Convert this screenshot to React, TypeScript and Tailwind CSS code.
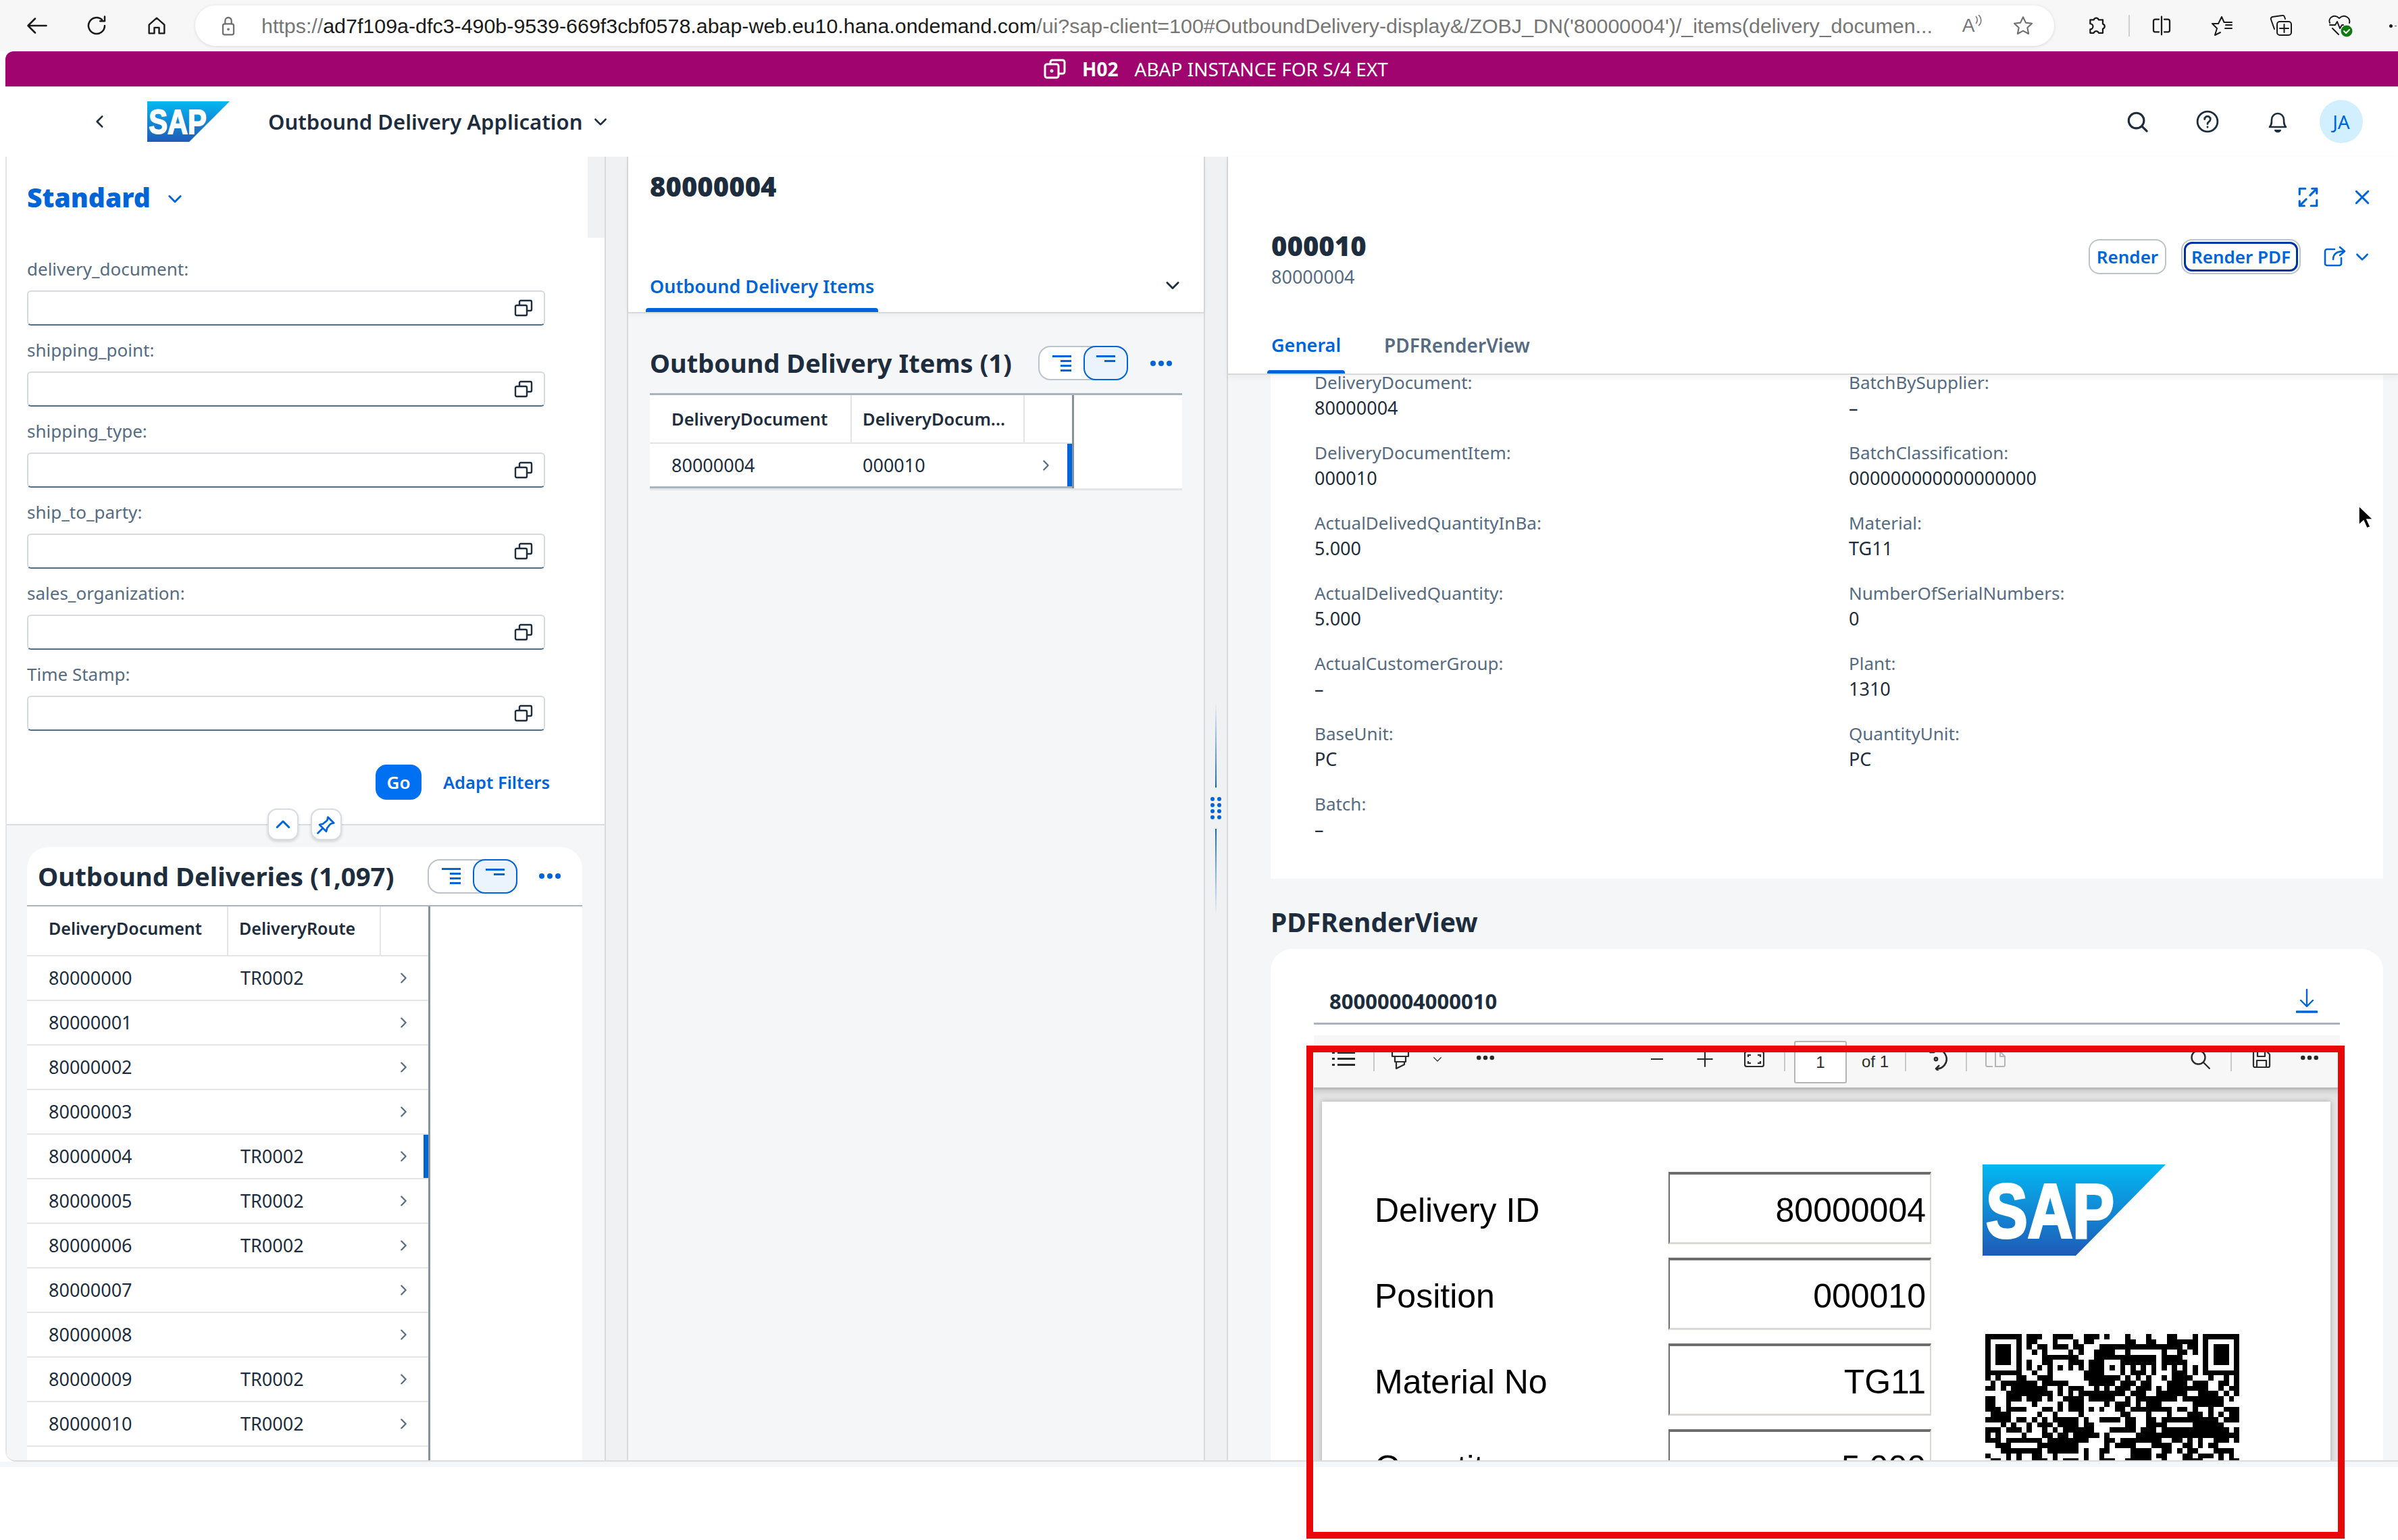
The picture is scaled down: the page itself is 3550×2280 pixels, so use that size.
import React from "react";

const QR_ROWS = [
  "0-6 8-10 13-16 19-21 23 27 31 35-36 40 42-48",
  "0 6 8-9 13 17 19-20 27-28 31-32 35-40 42 48",
  "0 2-4 6 8 10-11 13-15 17-18 22-37 39-40 42 44-46 48",
  "0 2-4 6 9 11 16 18 21-24 27 34 37-38 40 42 44-46 48",
  "0 2-4 6 11-17 21-32 34-37 42 44-46 48",
  "0 2-4 6 8 11-12 16-18 20-22 26-32 34-38 42 44-46 48",
  "0 6 8 10 12 14 16 18 20-22 24 26 28 30 32 34 36 38 40 42 48",
  "0-6 9 12 19-22 26 28-30 32 36-38 40 42-48",
  "0 2 6-7 10-12 19-25 27 29 31 34 36-39 43 46 48",
  "1 3-9 11-15 20-24 26-28 30-31 35-38 40-42 45-46 48",
  "0-1 3 5-11 14 16-18 21 23 25-27 29-31 33 35-42 45 47-48",
  "4-12 14 16 18-26 28-30 33-38 41-44 46 48",
  "0-1 4-6 8-10 12 15-18 20-24 27 29-36 38-45 47",
  "0-1 4 9 14 16-18 23 25-27 29 31-33 40-45",
  "0-2 4-7 11-12 14 16-18 20 22 25-26 28-35 37-38 40 43 46-48",
  "1-4 10 13 18 26-27 31 35 39-41 43 45 47-48",
  "0-4 6-7 9 11 13-17 19 22-25 27-28 31-32 34-44 46-48",
  "3 5 8 10-12 14-17 19-20 27-28 31-34 40-45",
  "0-2 4-6 8 11 13 15-20 24-28 30-32 34-46 48",
  "0 2 7 11-12 14-15 17-21 23 29-48",
  "0-2 4-10 12-19 23-24 26-33 36-37 39 41 44-46 48",
  "2-4 10-17 23 25-28 32-35 38-39 41 43-44",
  "3-10 12-17 19 22-23 28-31 34-35 37 39-40 44-47",
  "0 4 6 9-10 13 19 22 28-31 33-34 38-39 41-43 45 47",
  "1-2 4 6 9-11 13 15-17 19 22-24 27-31 34 38-41 45 47-48",
];

function QrCode() {
  const rects: React.ReactNode[] = [];
  QR_ROWS.forEach((row, y) => {
    row.split(" ").forEach((part) => {
      const [a, b] = part.split("-").map(Number);
      rects.push(<rect key={y + "-" + part} x={a} y={y} width={(b ?? a) - a + 1} height={1} />);
    });
  });
  return (
    <svg width="376" height="192" viewBox="0 0 49 25" className="block shrink-0" shapeRendering="crispEdges" fill="#000">
      {rects}
    </svg>
  );
}

function SapLogo({ w, h, id }: { w: number; h: number; id: string }) {
  return (
    <svg width={w} height={h} viewBox="0 0 271 135" preserveAspectRatio="none" className="block shrink-0">
      <defs>
        <linearGradient id={id} x1="0" y1="0" x2="0" y2="1">
          <stop offset="0" stopColor="#03b8f2" />
          <stop offset="1" stopColor="#1f5ab7" />
        </linearGradient>
      </defs>
      <polygon points="0,0 271,0 138,135 0,135" fill={`url(#${id})`} />
      <text x="5" y="108" fontFamily="'Liberation Sans', sans-serif" fontWeight="700" fontSize="114" fill="#fff" stroke="#fff" strokeWidth="4" textLength="190" lengthAdjust="spacingAndGlyphs">SAP</text>
    </svg>
  );
}

const Stroke = ({ s, c = "currentColor", w = 2, vb = 24, children }: { s: number; c?: string; w?: number; vb?: number; children: React.ReactNode }) => (
  <svg width={s} height={s} viewBox={`0 0 ${vb} ${vb}`} fill="none" stroke={c} strokeWidth={w} strokeLinecap="round" strokeLinejoin="round" className="block shrink-0">
    {children}
  </svg>
);

const Chevron = ({ s = 20, c = "#1d2d3e", dir = "down", w = 2.4 }: { s?: number; c?: string; dir?: "down" | "up" | "left" | "right"; w?: number }) => {
  const d = { down: "M5 9l7 7 7-7", up: "M5 15l7-7 7 7", left: "M15 5l-7 7 7 7", right: "M9 5l7 7-7 7" }[dir];
  return <Stroke s={s} c={c} w={w}><path d={d} /></Stroke>;
};

const ValueHelp = () => (
  <svg width="28" height="26" viewBox="0 0 28 26" fill="none" stroke="#1d2d3e" strokeWidth="2.4" className="block">
    <rect x="2" y="9" width="17" height="15" rx="2" />
    <path d="M8 9V4a2 2 0 0 1 2-2h14a2 2 0 0 1 2 2v11a2 2 0 0 1-2 2h-5" />
  </svg>
);

function Toggle() {
  return (
    <div className="flex h-[51px] w-[133px] shrink-0 rounded-[18px] border-2 border-[#bcc3ca] bg-white">
      <div className="flex flex-1 items-center justify-center">
        <svg width="28" height="24" viewBox="0 0 28 24" fill="#0064d9"><rect x="0" y="0" width="28" height="3" /><rect x="12" y="7" width="16" height="3" /><rect x="12" y="14" width="16" height="3" /><rect x="12" y="21" width="16" height="3" /></svg>
      </div>
      <div className="-my-[2px] -mr-[2px] flex w-[66px] items-start justify-center rounded-[18px] border-2 border-[#0064d9] bg-[#ebf3fd] pt-[12px]">
        <svg width="28" height="10" viewBox="0 0 28 10" fill="#0064d9"><rect x="0" y="0" width="28" height="3" /><rect x="12" y="7" width="16" height="3" /></svg>
      </div>
    </div>
  );
}

const Dots = ({ c = "#0064d9", w = 32 }: { c?: string; w?: number }) => (
  <svg width={w} height="8" viewBox="0 0 32 8" fill={c} className="block shrink-0"><circle cx="4" cy="4" r="4" /><circle cx="16" cy="4" r="4" /><circle cx="28" cy="4" r="4" /></svg>
);

const FIELDS = ["delivery_document:", "shipping_point:", "shipping_type:", "ship_to_party:", "sales_organization:", "Time Stamp:"];
const DELIVERIES: [string, string][] = [
  ["80000000", "TR0002"], ["80000001", ""], ["80000002", ""], ["80000003", ""], ["80000004", "TR0002"], ["80000005", "TR0002"],
  ["80000006", "TR0002"], ["80000007", ""], ["80000008", ""], ["80000009", "TR0002"], ["80000010", "TR0002"],
];
const LEFT_DETAILS: [string, string][] = [
  ["DeliveryDocument:", "80000004"], ["DeliveryDocumentItem:", "000010"], ["ActualDelivedQuantityInBa:", "5.000"], ["ActualDelivedQuantity:", "5.000"],
  ["ActualCustomerGroup:", "–"], ["BaseUnit:", "PC"], ["Batch:", "–"],
];
const RIGHT_DETAILS: [string, string][] = [
  ["BatchBySupplier:", "–"], ["BatchClassification:", "000000000000000000"], ["Material:", "TG11"], ["NumberOfSerialNumbers:", "0"], ["Plant:", "1310"], ["QuantityUnit:", "PC"],
];
const PDF_ROWS: [string, string][] = [["Delivery ID", "80000004"], ["Position", "000010"], ["Material No", "TG11"], ["Quantity", "5.000"]];

function BrowserBar() {
  const c = "#1a1a1a";
  return (
    <div className="flex h-[76px] shrink-0 items-center bg-[#f7f7f7] pl-[11px]">
      <div className="flex w-[88px] justify-center">
        <Stroke s={36} c={c} w={1.7}><path d="M21 12H3M10 5l-7 7 7 7" /></Stroke>
      </div>
      <div className="flex w-[88px] justify-center">
        <Stroke s={36} c={c} w={1.7}><path d="M20 12a8 8 0 1 1-2.6-5.9M20 3v4.5h-4.5" /></Stroke>
      </div>
      <div className="flex w-[89px] justify-center">
        <Stroke s={34} c={c} w={1.7}><path d="M4 11l8-7 8 7v9h-5.5v-6h-5v6H4z" /></Stroke>
      </div>
      <div className="ml-[13px] flex h-[60px] w-[2752px] shrink-0 items-center rounded-full bg-white shadow-[0_1px_5px_rgba(0,0,0,0.12)]">
        <div className="flex w-[98px] shrink-0 justify-center">
          <Stroke s={32} c="#6f6f6f" w={1.7}><rect x="6" y="10" width="12" height="12" rx="2" /><path d="M8.5 10V6.5a3.5 3.5 0 0 1 7 0V10" /><circle cx="12" cy="16" r="0.6" /></Stroke>
        </div>
        <div className="w-[2480px] shrink-0 overflow-hidden whitespace-nowrap font-['Liberation_Sans',sans-serif] text-[30.4px] leading-[36px] text-[#767676]">
          https://<span className="text-[#1a1a1a]">ad7f109a-dfc3-490b-9539-669f3cbf0578.abap-web.eu10.hana.ondemand.com</span>/ui?sap-client=100#OutboundDelivery-display&amp;/ZOBJ_DN('80000004')/_items(delivery_documen...
        </div>
        <div className="flex w-[106px] shrink-0 items-start justify-center font-['Liberation_Sans',sans-serif] text-[28px] leading-[32px] text-[#767676]">
          A
          <svg width="12" height="22" viewBox="0 0 12 22" fill="none" stroke="#767676" strokeWidth="1.6"><path d="M2 2c3 3 3 8 0 11M6 0c5 5 5 12 0 16" /></svg>
        </div>
        <div className="flex w-[44px] shrink-0 justify-center">
          <Stroke s={34} c="#6f6f6f" w={1.5}><path d="M12 3l2.8 5.9 6.4.8-4.7 4.4 1.2 6.4-5.7-3.1-5.7 3.1 1.2-6.4L2.8 9.7l6.4-.8z" /></Stroke>
        </div>
      </div>
      <div className="ml-[14px] flex w-[96px] justify-center">
        <Stroke s={32} c={c} w={1.7}><path d="M9.5 5.5a2.8 2.8 0 0 1 5.4 0h4.6v4.6a2.8 2.8 0 0 1 0 5.4v4.6h-4.6a2.8 2.8 0 0 0-5.4 0H5.5v-4a3 3 0 0 0 0-6.2V5.5z" /></Stroke>
      </div>
      <div className="h-[32px] w-[2px] bg-[#cfcfcf]" />
      <div className="flex w-[94px] justify-center">
        <Stroke s={32} c={c} w={1.7}><path d="M12 2v20M9 5H5a2 2 0 0 0-2 2v10a2 2 0 0 0 2 2h4M15 5h4a2 2 0 0 1 2 2v10a2 2 0 0 1-2 2h-4" /></Stroke>
      </div>
      <div className="flex w-[86px] justify-center">
        <svg width="34" height="32" viewBox="0 0 34 32" fill="none" stroke={c} strokeWidth="2" strokeLinejoin="round" strokeLinecap="round"><path d="M16 3l3.5 8H31M2 13h9l5-10M2 13l7 7-3 10 8-4M22 15h9M21 20h10" /></svg>
      </div>
      <div className="flex w-[88px] justify-center">
        <svg width="34" height="32" viewBox="0 0 34 32" fill="none" stroke={c} strokeWidth="2" strokeLinecap="round" strokeLinejoin="round"><path d="M7 21L2 7a3 3 0 0 1 2-4l14-2a3 3 0 0 1 4 2l1 3" /><rect x="11" y="10" width="21" height="20" rx="4" /><path d="M21.5 14v12M15 20h13" /></svg>
      </div>
      <div className="flex w-[88px] justify-center">
        <svg width="36" height="34" viewBox="0 0 36 34" fill="none" className="block"><path d="M2 13C-1 5 9-1 16 6c7-7 17-1 15 7M2 16h8l3-5 4 10 3-5h2M6 21l9 9" stroke={c} strokeWidth="2" strokeLinecap="round" strokeLinejoin="round" /><circle cx="27" cy="25" r="8.5" fill="#107c10" /><path d="M23 25l3 3 5-5" stroke="#fff" strokeWidth="2" strokeLinecap="round" strokeLinejoin="round" /></svg>
      </div>
      <div className="ml-[28px] h-[5px] w-[5px] rounded-full bg-[#1a1a1a]" />
      <div className="ml-[3px] h-[1px] w-[3px] bg-[#555]" />
    </div>
  );
}

function SystemBanner() {
  return (
    <div className="flex h-[52px] shrink-0 items-center justify-center rounded-tl-[12px] bg-[#a0056f] pl-[42px] text-[28px] leading-[36px] text-white">
      <svg width="33" height="30" viewBox="0 0 33 30" fill="none" stroke="#fff" strokeWidth="3" strokeLinejoin="round" className="shrink-0"><rect x="2" y="8" width="20" height="20" rx="3" /><path d="M10 8V5a3 3 0 0 1 3-3h15a3 3 0 0 1 3 3v14a3 3 0 0 1-3 3h-6" /><circle cx="12" cy="18" r="1" /></svg>
      <span className="ml-[24px] font-bold">H02</span>
      <span className="ml-[24px]">ABAP INSTANCE FOR S/4 EXT</span>
    </div>
  );
}

function ShellBar() {
  return (
    <div className="flex h-[104px] shrink-0 items-center bg-white pr-[52px] text-[#1d2d3e]">
      <div className="flex w-[210px] shrink-0 justify-start pl-[127px]"><Chevron dir="left" s={26} /></div>
      <SapLogo w={122} h={60} id="sap-small" />
      <div className="ml-[57px] text-[31px] font-semibold leading-[40px]">Outbound Delivery Application</div>
      <div className="ml-[14px]"><Chevron s={26} /></div>
      <div className="ml-auto flex items-center">
        <div className="flex w-[104px] justify-center"><Stroke s={34} c="#1d2d3e" w={2.2}><circle cx="11" cy="11" r="8" /><path d="M17 17l5 5" /></Stroke></div>
        <div className="flex w-[104px] justify-center"><Stroke s={34} c="#1d2d3e" w={2}><circle cx="12" cy="12" r="10.5" /><path d="M9 9.5a3 3 0 1 1 4.5 2.6c-1 .6-1.5 1.2-1.5 2.4M12 17.5v.3" /></Stroke></div>
        <div className="flex w-[104px] justify-center"><svg width="30" height="34" viewBox="0 0 30 34" fill="none" stroke="#1d2d3e" strokeWidth="2.6" strokeLinejoin="round"><path d="M3 25c3-3 3-6 3-11a9 9 0 0 1 18 0c0 5 0 8 3 11z" /><path d="M11 29c1 4 7 4 8 0" fill="#1d2d3e" /></svg></div>
        <div className="ml-[10px] flex h-[64px] w-[64px] items-center justify-center rounded-full bg-[#d1efff] text-[28px] text-[#0064d9]">JA</div>
      </div>
    </div>
  );
}

function FilterPanel() {
  return (
    <div className="relative h-[990px] shrink-0 border-b-2 border-[#d9dde1] bg-white pl-[30px] pt-[36px]">
      <div className="flex items-center text-[#0064d9]">
        <span className="text-[39px] font-black leading-[48px]">Standard</span>
        <span className="ml-[22px] mt-[4px]"><Chevron c="#0064d9" s={28} /></span>
      </div>
      <div className="mt-[64px] flex w-[767px] flex-col gap-[18px]">
        {FIELDS.map((f) => (
          <div key={f}>
            <div className="text-[26px] leading-[36px] text-[#556b82]">{f}</div>
            <div className="mt-[14px] flex h-[52px] items-center justify-end rounded-[6px] border-2 border-[#d5dadd] border-b-[#556b82] bg-white pr-[16px]">
              <ValueHelp />
            </div>
          </div>
        ))}
      </div>
      <div className="mt-[50px] flex w-[774px] items-center justify-end">
        <button className="h-[52px] w-[68px] rounded-[16px] bg-[#0070f2] text-[26px] font-semibold leading-[36px] text-white">Go</button>
        <span className="ml-[32px] text-[25.5px] font-semibold leading-[36px] text-[#0064d9]">Adapt Filters</span>
      </div>
      <div className="absolute right-0 top-0 h-[120px] w-[25px] bg-[#eff1f2]" />
      <div className="absolute left-[386px] top-[965px] flex gap-[18px]">
        <div className="flex h-[47px] w-[46px] items-center justify-center rounded-[14px] border-2 border-[#d9dde1] bg-white shadow-[0_2px_4px_rgba(0,0,0,0.15)]"><Chevron dir="up" c="#0064d9" s={30} /></div>
        <div className="flex h-[47px] w-[46px] items-center justify-center rounded-[14px] border-2 border-[#d9dde1] bg-white shadow-[0_2px_4px_rgba(0,0,0,0.15)]">
          <svg width="30" height="30" viewBox="0 0 24 24" fill="none" stroke="#0064d9" strokeWidth="2.2" strokeLinejoin="round" strokeLinecap="round"><path d="M14 3l7 7-4 1-4 5-1 4-8-8 4-1 5-4zM8 16l-6 6" /></svg>
        </div>
      </div>
    </div>
  );
}

function DeliveriesCard() {
  return (
    <div className="min-h-0 flex-1 overflow-hidden bg-[#f5f6f7] pl-[30px] pr-[33px] pt-[32px]">
      <div className="flex h-full flex-col overflow-hidden rounded-t-[32px] bg-white">
        <div className="flex h-[88px] shrink-0 items-center border-b-2 border-[#a9b4be] pl-[16px]">
          <div className="w-[577px] shrink-0 text-[38.3px] font-bold leading-[48px] text-[#1d2d3e]">Outbound Deliveries (1,097)</div>
          <Toggle />
          <div className="ml-[32px]"><Dots /></div>
        </div>
        <div className="flex min-h-0 w-[597px] flex-1 flex-col border-r-[3px] border-[#85929e]">
          <div className="flex h-[74px] shrink-0 border-b-2 border-[#e5e5e5] text-[25px] font-semibold leading-[36px] text-[#1d2d3e]">
            <div className="flex w-[298px] items-center border-r-2 border-[#e5e5e5] pb-[8px] pl-[32px]">DeliveryDocument</div>
            <div className="flex w-[226px] items-center border-r-2 border-[#e5e5e5] pb-[8px] pl-[16px]">DeliveryRoute</div>
          </div>
          {DELIVERIES.map(([id, route], i) => (
            <div key={id} className="relative flex h-[66px] shrink-0 items-center border-b-2 border-[#e5e5e5] text-[27px] leading-[36px] text-[#1d2d3e]">
              <div className="w-[298px] pl-[32px]">{id}</div>
              <div className="w-[226px] pl-[18px]">{route}</div>
              <div className="flex flex-1 justify-start pl-[22px]"><Chevron dir="right" c="#556b82" s={22} /></div>
              {i === 4 && <div className="absolute bottom-0 right-0 top-0 w-[7px] bg-[#0064d9]" />}
            </div>
          ))}
        </div>
      </div>
    </div>
  );
}

function Gutter({ handle }: { handle?: boolean }) {
  return (
    <div className={handle ? "flex h-full w-[36px] shrink-0 flex-col items-center border-x-2 border-[#d9dadb] bg-[#eff1f2] pt-[808px]" : "h-full w-[35px] shrink-0 border-x-2 border-[#d9dadb] bg-[#eff1f2]"}>
      {handle && (
        <>
          <div className="h-[126px] w-[2px] bg-gradient-to-b from-[#eff1f2] to-[#0064d9]" />
          <div className="mt-[14px] grid grid-cols-2 gap-x-[4px] gap-y-[3px]">
            {Array.from({ length: 8 }).map((_, i) => (<div key={i} className="h-[6px] w-[6px] rounded-full bg-[#0064d9]" />))}
          </div>
          <div className="mt-[14px] h-[127px] w-[2px] bg-gradient-to-b from-[#0064d9] to-[#eff1f2]" />
        </>
      )}
    </div>
  );
}

function ItemsColumn() {
  return (
    <div className="flex h-full w-[852px] shrink-0 flex-col bg-[#f5f6f7]">
      <div className="relative z-10 flex h-[232px] shrink-0 flex-col border-b-2 border-[#d9d9d9] bg-white pl-[26px] pr-[32px] shadow-[0_3px_8px_rgba(0,0,0,0.04)]">
        <div className="mt-[20px] pl-[6px] text-[40px] font-black leading-[48px] text-[#1d2d3e]">80000004</div>
        <div className="mt-auto flex items-end justify-between">
          <div className="flex flex-col">
            <div className="px-[6px] text-[27px] font-semibold leading-[36px] text-[#0064d9]">Outbound Delivery Items</div>
            <div className="mt-[14px] h-[6px] rounded-t-[4px] bg-[#0064d9]" />
          </div>
          <div className="mb-[26px]"><Chevron s={28} /></div>
        </div>
      </div>
      <div className="flex items-center pl-[32px] pt-[48px]">
        <div className="w-[575px] shrink-0 text-[38px] font-bold leading-[51px] text-[#1d2d3e]">Outbound Delivery Items (1)</div>
        <Toggle />
        <div className="ml-[33px]"><Dots /></div>
      </div>
      <div className="ml-[32px] mt-[19px] w-[788px] border-y-[3px] border-y-[#a9b4be] border-b-[#e5e5e5] bg-white">
        <div className="w-[628px] border-r-[3px] border-[#85929e]">
          <div className="flex h-[72px] border-b-2 border-[#e5e5e5] text-[25.5px] font-semibold leading-[36px] text-[#1d2d3e]">
            <div className="flex w-[299px] items-center border-r-2 border-[#e5e5e5] pl-[32px]">DeliveryDocument</div>
            <div className="flex w-[256px] items-center border-r-2 border-[#e5e5e5] pl-[16px]">DeliveryDocum...</div>
          </div>
          <div className="relative flex h-[66px] items-center border-b-[3px] border-[#a9b4be] text-[27px] leading-[36px] text-[#1d2d3e]">
            <div className="w-[299px] pl-[32px]">80000004</div>
            <div className="w-[256px] pl-[16px]">000010</div>
            <div className="flex-1 pl-[20px]"><Chevron dir="right" c="#556b82" s={22} /></div>
            <div className="absolute bottom-0 right-0 top-0 w-[7px] bg-[#0064d9]" />
          </div>
        </div>
      </div>
    </div>
  );
}

function DetailList({ items }: { items: [string, string][] }) {
  return (
    <div className="flex w-[791px] shrink-0 flex-col gap-[41px]">
      {items.map(([l, v]) => (
        <div key={l}>
          <div className="text-[26px] leading-[22px] text-[#556b82]">{l}</div>
          <div className="mt-[13px] text-[27px] leading-[28px] text-[#1d2d3e]">{v}</div>
        </div>
      ))}
    </div>
  );
}

function PdfToolbar() {
  const ink = "#2b2b2b";
  const Sep = () => <div className="mt-[25px] h-[28px] w-[2px] shrink-0 self-start bg-[#c8c8c8]" />;
  return (
    <div className="flex h-[80px] shrink-0 items-start border-b-[3px] border-[#bbbbbb] bg-[#f7f7f7] pr-[18px] font-['Liberation_Sans',sans-serif]">
      <div className="flex h-[77px] w-[88px] items-center justify-center pb-[7px]"><svg width="34" height="22" viewBox="0 0 34 22" fill={ink}><rect x="0" y="0" width="4" height="3" /><rect x="8" y="0" width="26" height="3" /><rect x="0" y="9" width="4" height="3" /><rect x="8" y="9" width="26" height="3" /><rect x="0" y="18" width="4" height="3" /><rect x="8" y="18" width="26" height="3" /></svg></div>
      <Sep />
      <div className="flex h-[77px] w-[76px] items-center justify-center pb-[7px]"><svg width="28" height="32" viewBox="0 0 28 32" fill="none" stroke={ink} strokeWidth="2.2" strokeLinejoin="round"><path d="M2 2h24v10H2zM6 12v8h16v-8M8 20v10l12-6v-4" /></svg></div>
      <div className="flex h-[77px] w-[34px] items-center justify-center pb-[7px]"><Chevron s={18} c={ink} w={1.6} /></div>
      <div className="flex h-[77px] w-[108px] items-center justify-center pb-[12px]"><Dots c={ink} w={26} /></div>
      <div className="w-[165px] shrink-0" />
      <div className="flex h-[77px] w-[70px] items-center justify-center pb-[7px]"><div className="h-[2px] w-[18px] bg-[#2b2b2b]" /></div>
      <div className="flex h-[77px] w-[72px] items-center justify-center pb-[7px]"><Stroke s={26} c={ink} w={2}><path d="M12 2v20M2 12h20" /></Stroke></div>
      <div className="flex h-[77px] w-[74px] items-center justify-center pb-[7px]"><svg width="30" height="24" viewBox="0 0 30 24" fill="none" stroke={ink} strokeWidth="2.2"><rect x="1" y="1" width="28" height="22" rx="3" /><path d="M6 9V6h4M20 6h4v3M6 15v3h4M20 18h4v-3" /></svg></div>
      <div className="w-[7px] shrink-0" />
      <Sep />
      <div className="ml-[13px] mt-[8px] flex h-[63px] w-[78px] shrink-0 items-center justify-center rounded-[3px] border-2 border-[#b5b5b5] bg-white text-[24px] text-[#2b2b2b]">1</div>
      <div className="ml-[22px] mt-[24px] w-[64px] shrink-0 text-[24px] leading-[30px] text-[#2b2b2b]">of 1</div>
      <Sep />
      <div className="flex h-[77px] w-[88px] items-center justify-center pb-[7px]"><Stroke s={34} c={ink} w={1.8}><path d="M6 5a10 10 0 1 1 6 17M12 22l3-3M12 22l3 3M6 5V1M6 5h4" /><circle cx="12" cy="12" r="1.5" /></Stroke></div>
      <Sep />
      <div className="flex h-[77px] w-[84px] items-center justify-center pb-[7px]"><svg width="30" height="28" viewBox="0 0 30 28" fill="none" stroke="#b5b5b5" strokeWidth="2"><path d="M11 3H3a2 2 0 0 0-2 2v18a2 2 0 0 0 2 2h8M15 3h7l7 7v13a2 2 0 0 1-2 2H15zM22 3v7h7" /></svg></div>
      <div className="ml-auto flex h-[77px] w-[90px] items-center justify-center pb-[7px]"><Stroke s={30} c={ink} w={1.9}><circle cx="10" cy="10" r="8" /><path d="M16 16l7 7" /></Stroke></div>
      <Sep />
      <div className="flex h-[77px] w-[88px] items-center justify-center pb-[7px]"><svg width="28" height="28" viewBox="0 0 28 28" fill="none" stroke={ink} strokeWidth="2.2" strokeLinejoin="round"><path d="M2 4a2 2 0 0 1 2-2h17l5 5v17a2 2 0 0 1-2 2H4a2 2 0 0 1-2-2z" /><path d="M8 2v8h11V2M7 26V16h14v10" /></svg></div>
      <div className="flex h-[77px] w-[54px] items-center justify-center pb-[12px]"><Dots c={ink} w={26} /></div>
    </div>
  );
}

function PdfPage() {
  return (
    <div className="min-h-0 flex-1 overflow-hidden bg-[#e3e3e3] pl-[12px] pr-[14px] pt-[18px] shadow-[inset_0_6px_8px_-4px_rgba(0,0,0,0.15)]">
      <div className="flex h-[700px] bg-white pl-[78px] pt-[93px] font-['Liberation_Sans',sans-serif] text-[50px] leading-[56px] text-black shadow-[0_0_8px_rgba(0,0,0,0.25)]">
        <div className="flex w-[824px] shrink-0 flex-col gap-[20px] pt-[11px]">
          {PDF_ROWS.map(([l, v]) => (
            <div key={l} className="flex h-[107px] shrink-0 items-center">
              <div className="w-[435px] shrink-0 pt-[6px]">{l}</div>
              <div className="flex h-[107px] w-[389px] shrink-0 items-center justify-end border-2 border-b-[3px] border-t-[4px] border-[#dbd9d4] border-l-[#6d6d6d] border-t-[#6d6d6d] pr-[6px] pt-[6px]">{v}</div>
            </div>
          ))}
        </div>
        <div className="ml-[76px] flex shrink-0 flex-col">
          <SapLogo w={271} h={135} id="sap-large" />
          <div className="ml-[4px] mt-[116px]"><QrCode /></div>
        </div>
      </div>
    </div>
  );
}

function DetailColumn() {
  return (
    <div className="flex h-full min-w-0 flex-1 flex-col bg-[#f5f6f7]">
      <div className="relative z-10 flex h-[323px] shrink-0 flex-col border-b-2 border-[#d9d9d9] bg-white pl-[64px] shadow-[0_4px_10px_rgba(0,0,0,0.05)]">
        <div className="mt-[40px] flex h-[40px] items-center justify-end pr-[38px]">
          <Stroke s={34} c="#0064d9" w={2.2}><path d="M3 9V3h6M21 15v6h-6M14 10l7-7M21 3v5M21 3h-5M10 14l-7 7M3 21v-5M3 21h5" /></Stroke>
          <div className="ml-[48px]"><Stroke s={30} c="#0064d9" w={2.4}><path d="M5 5l14 14M19 5L5 19" /></Stroke></div>
        </div>
        <div className="mt-[28px] flex items-start justify-between pr-[40px]">
          <div>
            <div className="text-[40px] font-black leading-[48px] text-[#1d2d3e]">000010</div>
            <div className="mt-[4px] text-[27px] leading-[36px] text-[#556b82]">80000004</div>
          </div>
          <div className="mt-[14px] flex items-center">
            <button className="h-[52px] w-[115px] rounded-[16px] border-2 border-[#bcc3ca] bg-white text-[26px] font-semibold text-[#0064d9]">Render</button>
            <button className="ml-[22px] h-[52px] w-[177px] rounded-[16px] border-2 border-[#bcc3ca] bg-white p-[2px] text-[26px] font-semibold text-[#0064d9]">
              <span className="flex h-full items-center justify-center rounded-[12px] border-[3px] border-[#0032a5]">Render PDF</span>
            </button>
            <div className="ml-[34px]"><svg width="34" height="32" viewBox="0 0 34 32" fill="none" stroke="#0064d9" strokeWidth="2.6" strokeLinecap="round" strokeLinejoin="round"><path d="M16 5H5a3 3 0 0 0-3 3v18a3 3 0 0 0 3 3h18a3 3 0 0 0 3-3v-8M14 20c0-8 6-12 16-12M24 2l7 6-7 6" /></svg></div>
            <div className="ml-[10px]"><Chevron c="#0064d9" s={26} /></div>
          </div>
        </div>
        <div className="mt-auto flex gap-[58px] text-[27px] font-semibold leading-[36px]">
          <div className="-ml-[6px] flex flex-col">
            <div className="px-[6px] text-[#0064d9]">General</div>
            <div className="mt-[19px] h-[5px] rounded-t-[4px] bg-[#0064d9]" />
          </div>
          <div className="text-[28px] text-[#556b82]">PDFRenderView</div>
        </div>
      </div>
      <div className="min-h-0 flex-1 overflow-hidden pl-[63px] pr-[22px]">
        <div className="flex h-[746px] bg-white pl-[65px]">
          <DetailList items={LEFT_DETAILS} />
          <DetailList items={RIGHT_DETAILS} />
        </div>
        <div className="mt-[41px] text-[39px] font-bold leading-[46px] text-[#1d2d3e]">PDFRenderView</div>
        <div className="mt-[17px] flex h-[800px] flex-col rounded-t-[32px] bg-white px-[64px]">
          <div className="flex h-[112px] shrink-0 items-end border-b-[3px] border-[#a9b4be] pb-[14px] pl-[23px] pr-[33px]">
            <div className="text-[31px] font-bold leading-[36px] text-[#1d2d3e]">80000004000010</div>
            <div className="ml-auto"><svg width="32" height="36" viewBox="0 0 32 36" fill="none" stroke="#0064d9" strokeWidth="2.4" strokeLinecap="round" strokeLinejoin="round"><path d="M16 1v24M7 17l9 9 9-9" /><path d="M1 34h30" strokeWidth="3.4" /></svg></div>
          </div>
          <div className="mt-[16px] flex min-h-0 flex-1 flex-col">
            <PdfToolbar />
            <PdfPage />
          </div>
        </div>
      </div>
    </div>
  );
}

export default function App() {
  return (
    <div className="relative flex h-[2280px] w-[3550px] flex-col overflow-hidden bg-white font-['Noto_Sans',sans-serif]">
      <BrowserBar />
      <div className="ml-[8px] flex h-[2088px] shrink-0 flex-col overflow-hidden rounded-bl-[16px] border-b-2 border-[#dcdcdc]">
        <SystemBanner />
        <ShellBar />
        <div className="flex min-h-0 flex-1">
          <div className="flex h-full w-[887px] shrink-0 flex-col border-l-2 border-[#e3e5e7]">
            <FilterPanel />
            <DeliveriesCard />
          </div>
          <Gutter />
          <ItemsColumn />
          <Gutter handle />
          <DetailColumn />
        </div>
      </div>
      <div className="h-[8px] shrink-0 bg-[#f5f6f7]" />
      <div className="absolute left-[3206px] top-[322px] h-[110px] w-[248px] border-[10px] border-[#ea0707]" />
      <div className="absolute left-[1934px] top-[1548px] h-[730px] w-[1537px] border-[10px] border-[#ea0707]" />
      <svg className="absolute left-[3490px] top-[748px]" width="24" height="36" viewBox="0 0 24 36"><path d="M2 1v28l7-6 5 11 5-2-5-11h9z" fill="#000" stroke="#fff" strokeWidth="1.5" /></svg>
    </div>
  );
}
